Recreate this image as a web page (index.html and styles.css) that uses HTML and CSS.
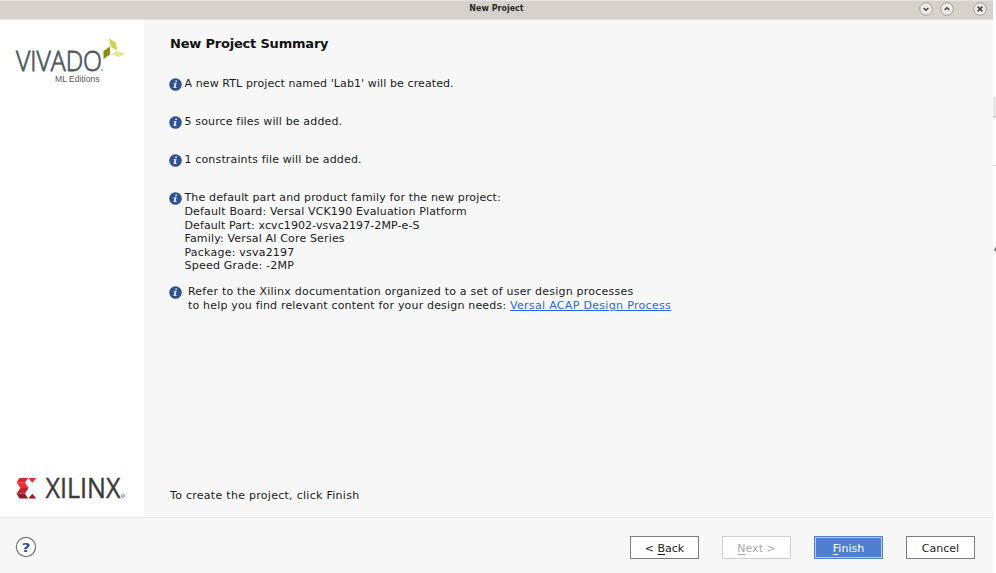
FILE: index.html
```
<!DOCTYPE html>
<html lang="en">
<head>
<meta charset="utf-8">
<title>New Project</title>
<link rel="stylesheet" href="styles.css">
</head>
<body>
<svg class="defs" width="0" height="0" aria-hidden="true">
  <symbol id="info" viewBox="0 0 13 13">
    <circle cx="6.5" cy="6.5" r="6.3" fill="#30528f"/>
    <path d="M6.4 2.4h1.8l-.3 1.6H6.100zM4.900 5.100h2.700l-.9 4h.9l-.2 1H4.500l.9-4h-.8z" fill="#dce5f3"/>
  </symbol>
</svg>
<div class="screen">
  <div class="window">
    <header class="titlebar">
      <span class="title">New Project</span>
      <div class="controls">
        <svg class="ctl" viewBox="0 0 14 14"><circle cx="7" cy="7" r="6.300"/><path d="M4.600 6 7 8.200 9.400 6"/></svg>
        <svg class="ctl" viewBox="0 0 14 14"><circle cx="7" cy="7" r="6.300"/><path d="M4.600 8 7 5.800 9.400 8"/></svg>
        <svg class="ctl close" viewBox="0 0 14 14"><circle cx="7" cy="7" r="6.300"/><path d="M4.600 4.600l4.800 4.800M9.400 4.600 4.600 9.400"/></svg>
      </div>
    </header>
    <div class="main">
      <aside class="sidebar">
        <svg class="vivado" width="112" height="48" viewBox="0 0 112 48">
          <text class="vivado-name" x="0" y="33" textLength="86" lengthAdjust="spacingAndGlyphs">VIVADO</text>
          <circle cx="85.800" cy="32.200" r=".8" fill="#6d7477"/>
          <text class="edition" x="39" y="43.500" textLength="44.500" lengthAdjust="spacingAndGlyphs">ML Editions</text>
          <path d="M93 .2 100 4.800 101 12.500 94.800 9z" fill="#cbd64c"/>
          <path d="M94 8.500V16.500L87.500 21V13z" fill="#8b8d13"/>
          <path d="M95 16.500 101 12.500 109.500 15.700 103 19z" fill="#e3e8a0"/>
        </svg>
        <svg class="xilinx" width="112" height="26" viewBox="0 0 112 26">
          <path d="M3.500 1H12L9 5.500H.500z" fill="#e3242b"/>
          <path d="M12.300 1H20.300L16.300 5.800z" fill="#ee2b31"/>
          <path d="M.500 5.500H9L12.500 11H4.500z" fill="#ed2f35"/>
          <path d="M4.500 11H12.500L9 16.500H.500z" fill="#c4202a"/>
          <path d="M.500 16.500H9L12 21.500H3.500z" fill="#981b23"/>
          <path d="M16.300 16.800 20.300 21.500H12.300z" fill="#a31b25"/>
          <text class="xilinx-name" x="29.500" y="21" textLength="75" lengthAdjust="spacingAndGlyphs">XILINX</text>
          <circle cx="107" cy="19" r="1.500" fill="#ddd" stroke="#888" stroke-width=".8"/>
        </svg>
      </aside>
      <main class="content">
        <h1>New Project Summary</h1>
        <div class="item"><svg class="info"><use href="#info"/></svg><p class="t10">A new RTL project named 'Lab1' will be created.</p></div>
        <div class="item"><svg class="info"><use href="#info"/></svg><p class="t15">5 source files will be added.</p></div>
        <div class="item"><svg class="info"><use href="#info"/></svg><p class="t15">1 constraints file will be added.</p></div>
        <div class="item part"><svg class="info"><use href="#info"/></svg><div>
          <p class="t15">The default part and product family for the new project:</p>
          <p class="t15">Default Board: Versal VCK190 Evaluation Platform</p>
          <p class="t10">Default Part: xcvc1902-vsva2197-2MP-e-S</p>
          <p class="t15">Family: Versal AI Core Series</p>
          <p class="t22">Package: vsva2197</p>
          <p class="t22">Speed Grade: -2MP</p>
        </div></div>
        <div class="item refer"><svg class="info"><use href="#info"/></svg><div>
          <p class="t22">Refer to the Xilinx documentation organized to a set of user design processes</p>
          <p class="t18">to help you find relevant content for your design needs: <a href="#">Versal ACAP Design Process</a></p>
        </div></div>
        <p class="hint">To create the project, click Finish</p>
      </main>
    </div>
    <footer class="footer">
      <svg class="help" width="22" height="22" viewBox="0 0 22 22"><circle cx="11" cy="11" r="9.600" fill="#fff" stroke="#777" stroke-width="1.200"/><text x="11" y="15.500" text-anchor="middle" textLength="9" lengthAdjust="spacingAndGlyphs">?</text></svg>
      <div class="buttons">
        <button>&lt; <u>B</u>ack</button>
        <button class="disabled"><u>N</u>ext &gt;</button>
        <button class="primary"><u>F</u>inish</button>
        <button>Cancel</button>
      </div>
    </footer>
  </div>
  <div class="edge"><i class="thumb"></i><i class="rule"></i><i class="mark"></i></div>
</div>
</body>
</html>
```
FILE: styles.css
```
* { box-sizing: border-box; }
body { margin: 0; background: #fff; color: #1a1a1a; font: 11px/13.6px "DejaVu Sans", sans-serif; }
p, h1 { margin: 0; white-space: nowrap; }
.defs { position: absolute; }
.screen { display: flex; width: 996px; height: 573px; overflow: hidden; }
.window { display: flex; flex-direction: column; width: 993px; background: #f7f7f7; }
.titlebar { display: grid; grid-template-columns: 1fr auto 1fr; align-items: center; height: 20px; background: #d6d1cd; border-top: 1px solid #e5e3e1; border-bottom: 1px solid #e3e0dd; }
.title { grid-column: 2; font-weight: bold; font-size: 8px; line-height: 16px; margin-bottom: 2px; color: #292725; }
.controls { display: flex; justify-content: flex-end; gap: 7px; padding-right: 6px; margin-top: -3px; }
.ctl { width: 14px; height: 14px; fill: #eceae8; stroke: #9a9591; stroke-width: .9; }
.ctl path { fill: none; stroke: #444; stroke-width: 1.5; }
.ctl.close { margin-left: 12px; }
.main { display: flex; height: 497px; }
.sidebar { display: flex; flex-direction: column; justify-content: space-between; width: 144px; padding: 18px 0 14px 16px; background: #fff; }
.vivado, .xilinx { display: block; overflow: visible; }
.vivado-name { font: 300 28px "Open Sans", sans-serif; fill: #4e585d; stroke: #4e585d; stroke-width: .8; }
.edition { font: 9px "Liberation Sans", sans-serif; fill: #555; }
.xilinx-name { font: 28px "Open Sans", sans-serif; fill: #3d3a3b; stroke: #3d3a3b; stroke-width: .4; }
.content { display: flex; flex-direction: column; flex: 1; padding: 16px 0 14px 25px; }
h1 { margin-left: 1px; font-size: 13px; line-height: 15px; letter-spacing: -.2px; color: #111; }
.item { display: flex; height: 38.200px; }
h1 + .item { margin-top: 25.900px; }
.info { flex: none; width: 13px; height: 13px; margin: .8px 2.500px 0 0; }
.item.part { height: 93.800px; }
.refer .info { margin-right: 6px; }
.t10 { letter-spacing: .1px; }
.t15 { letter-spacing: .15px; }
.t18 { letter-spacing: .18px; }
.t22 { letter-spacing: .22px; }
a { color: #2468e8; text-decoration: underline; letter-spacing: .32px; }
.hint { margin: auto 0 0 1px; letter-spacing: .28px; }
.footer { display: flex; flex: 1; align-items: center; justify-content: space-between; padding: 3px 18px 0 15px; border-top: 1px solid #e6e6e6; }
.help text { font: bold 12px "DejaVu Sans", sans-serif; fill: #30509a; }
.buttons { display: flex; gap: 23px; }
button { width: 69px; height: 23px; padding: 2px 0 0; border: 1px solid #7c7c7c; background: #fff; color: #1a1a1a; font: 11px/19px "DejaVu Sans", sans-serif; }
u { text-underline-offset: 2px; }
.disabled { border-color: #cfcfcf; color: #a8a8a8; }
.primary { border-color: #4b79cb; background: #507ecf; box-shadow: inset 0 0 0 1px #b7ccef; outline: 1px solid #507ecf; outline-offset: -1px; color: #fff; }
.edge { display: flex; flex-direction: column; width: 3px; }
.thumb { height: 21px; margin-top: 97px; background: #e8e8e8; border-bottom: 2px solid #d3d3d3; }
.rule { height: 1px; margin-top: 47px; background: #d3d3d3; }
.mark { width: 2px; height: 6px; margin: 79px 0 0 1px; background: linear-gradient(120deg, #fff 40%, #888 60%); }
```
